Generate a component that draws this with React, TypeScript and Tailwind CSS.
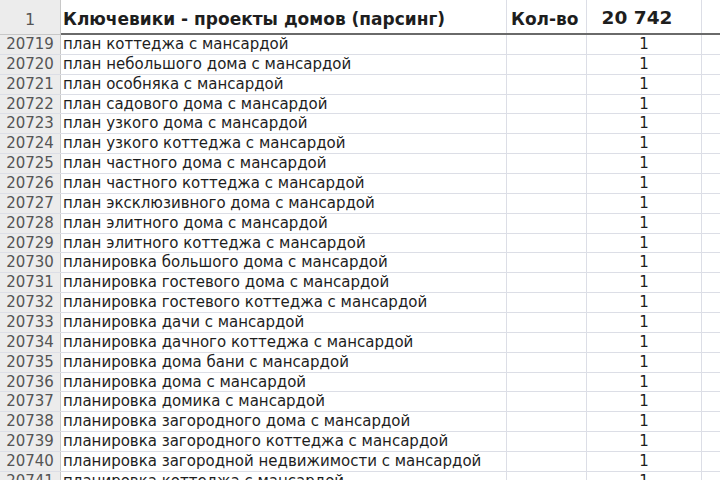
import React from "react";

const rows: [number, string][] = [
  [20719, "план коттеджа с мансардой"],
  [20720, "план небольшого дома с мансардой"],
  [20721, "план особняка с мансардой"],
  [20722, "план садового дома с мансардой"],
  [20723, "план узкого дома с мансардой"],
  [20724, "план узкого коттеджа с мансардой"],
  [20725, "план частного дома с мансардой"],
  [20726, "план частного коттеджа с мансардой"],
  [20727, "план эксклюзивного дома с мансардой"],
  [20728, "план элитного дома с мансардой"],
  [20729, "план элитного коттеджа с мансардой"],
  [20730, "планировка большого дома с мансардой"],
  [20731, "планировка гостевого дома с мансардой"],
  [20732, "планировка гостевого коттеджа с мансардой"],
  [20733, "планировка дачи с мансардой"],
  [20734, "планировка дачного коттеджа с мансардой"],
  [20735, "планировка дома бани с мансардой"],
  [20736, "планировка дома с мансардой"],
  [20737, "планировка домика с мансардой"],
  [20738, "планировка загородного дома с мансардой"],
  [20739, "планировка загородного коттеджа с мансардой"],
  [20740, "планировка загородной недвижимости с мансардой"],
  [20741, "планировка коттеджа с мансардой"],
];

export default function App() {
  return (
    <div className="w-[720px] h-[480px] overflow-hidden bg-white font-['DejaVu_Sans',sans-serif] text-[#1e1e1e]">
      {/* header row */}
      <div className="flex h-[35px]">
        <div className="w-[61px] shrink-0 bg-[#ececec] border-r border-b border-[#c8c8c8] flex items-end justify-center pb-[2px] text-[16px] text-[#555]">
          1
        </div>
        <div className="flex flex-1 border-b-2 border-[#6a6a6a]">
          <div className="w-[446px] shrink-0 border-r border-[#dcdee6] flex items-end pl-[2px] pb-[1px] text-[17px] font-bold whitespace-nowrap">
            Ключевики - проекты домов (парсинг)
          </div>
          <div className="w-[80px] shrink-0 border-r border-[#dcdee6] flex items-end pl-[4px] pb-[1px] text-[17px] font-bold">
            Кол-во
          </div>
          <div className="w-[115px] shrink-0 border-r border-[#dcdee6] flex items-end justify-center pr-[14px] pb-[1px] text-[18.5px] font-bold">
            20 742
          </div>
          <div className="flex-1" />
        </div>
      </div>
      {rows.map(([n, text]) => (
        <div key={n} className="flex h-[19.86px] border-b border-[#dcdee6] text-[15px] leading-none">
          <div className="w-[61px] shrink-0 bg-[#ececec] border-r border-[#c8c8c8] flex items-center justify-center text-[#555]">
            {n}
          </div>
          <div className="w-[446px] shrink-0 border-r border-[#dcdee6] flex items-center pl-[2px] whitespace-nowrap">
            {text}
          </div>
          <div className="w-[80px] shrink-0 border-r border-[#dcdee6]" />
          <div className="w-[115px] shrink-0 border-r border-[#dcdee6] flex items-center justify-center">
            1
          </div>
          <div className="flex-1" />
        </div>
      ))}
    </div>
  );
}
